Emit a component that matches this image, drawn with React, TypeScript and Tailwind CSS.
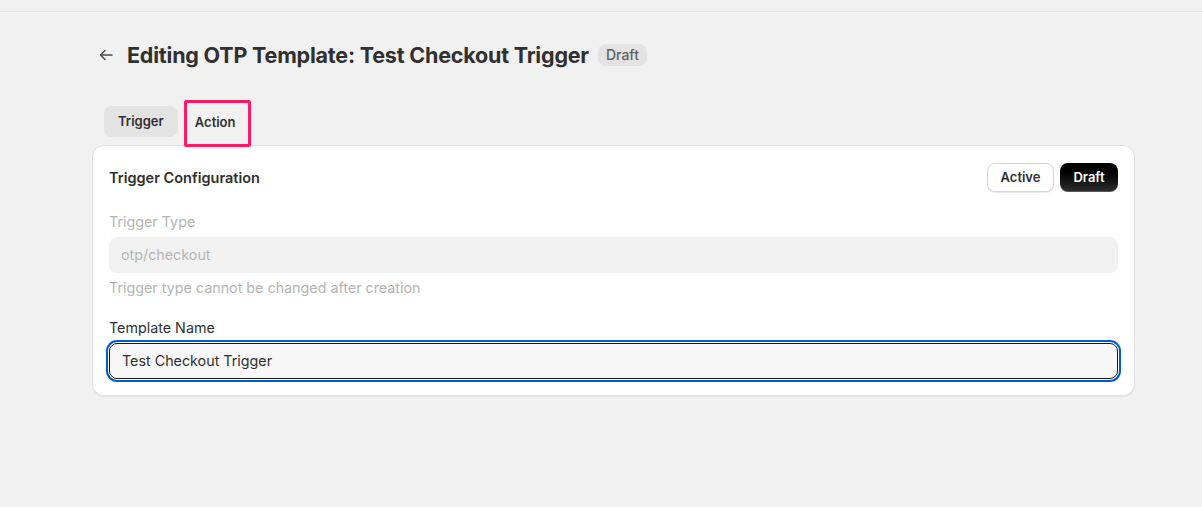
import React from "react";

export default function App() {
  return (
    <div className="min-h-[507px] w-full bg-[#f1f1f1] text-[#303030]" style={{ fontFamily: "Inter, 'Noto Sans', sans-serif" }}>
      <div className="h-[12px] border-b border-[#e3e3e3]" />
      <div className="pl-[92px] pr-[67px]">
        <div className="mt-[28px] flex h-[30px] items-center pl-[6px]">
          <svg width="16" height="16" viewBox="0 0 16 16" fill="none" className="text-[#4a4a4a]">
            <path d="M14 8H2.5M7 3.5L2.5 8L7 12.5" stroke="currentColor" strokeWidth="1.5" strokeLinecap="round" strokeLinejoin="round" />
          </svg>
          <h1 className="ml-[13px] text-[21.5px] font-bold tracking-[-0.2px] text-[#303030] leading-[28px]">
            Editing OTP Template: Test Checkout Trigger
          </h1>
          <span className="ml-[9px] rounded-[8px] bg-[#e3e3e3] px-[8px] py-[2px] text-[14px] font-medium leading-[18px] text-[#616161]">
            Draft
          </span>
        </div>
        <div className="flex items-start h-[47px] pl-[12px] mt-[30px]">
          <button className="mt-[6px] h-[31px] rounded-[8px] bg-[#e3e3e3] px-[14px] text-[13px] font-semibold text-[#303030]">
            Trigger
          </button>
          <button className="ml-[6px] h-[47px] w-[67px] border-[3px] border-[#ff1a66] rounded-[2px] pr-[4px] pb-[2px] text-[13px] font-semibold text-[#303030]">
            Action
          </button>
        </div>
        <div className="-mt-[2px] rounded-[12px] border border-[#e3e3e3] bg-white px-[16px] pt-[17px] pb-[16px] shadow-[0_1px_0_rgba(0,0,0,0.05)]">
          <div className="flex items-center justify-between">
            <h2 className="text-[14.5px] font-semibold leading-[20px] text-[#303030]">Trigger Configuration</h2>
            <div className="flex items-center gap-[6px]">
              <button className="h-[29px] w-[67px] rounded-[8px] border border-[#d4d4d4] bg-white text-[13px] font-semibold text-[#303030] shadow-[0_1px_0_rgba(0,0,0,0.08)]">
                Active
              </button>
              <button className="h-[29px] w-[58px] rounded-[8px] bg-gradient-to-b from-[#000000] to-[#303030] text-[13px] font-semibold text-white shadow-[inset_0_-1px_0_rgba(255,255,255,0.2)]">
                Draft
              </button>
            </div>
          </div>
          <div className="mt-[20px] text-[14.3px] leading-[20px] text-[#b5b5b5]">Trigger Type</div>
          <div className="mt-[5px] flex h-[36px] items-center rounded-[8px] bg-[#f1f1f1] px-[12px] text-[14.3px] text-[#b5b5b5]">
            otp/checkout
          </div>
          <div className="mt-[5px] text-[14.3px] leading-[20px] text-[#b5b5b5]">Trigger type cannot be changed after creation</div>
          <div className="mt-[20px] text-[14.3px] leading-[20px] text-[#303030]">Template Name</div>
          <div className="mt-[5px] flex h-[36px] items-center rounded-[8px] border border-[#1a1a1a] bg-[#f7f7f7] px-[12px] text-[14.3px] text-[#303030] outline-2 outline-offset-1 outline-[#005bd3] outline-solid">
            Test Checkout Trigger
          </div>
        </div>
      </div>
    </div>
  );
}
